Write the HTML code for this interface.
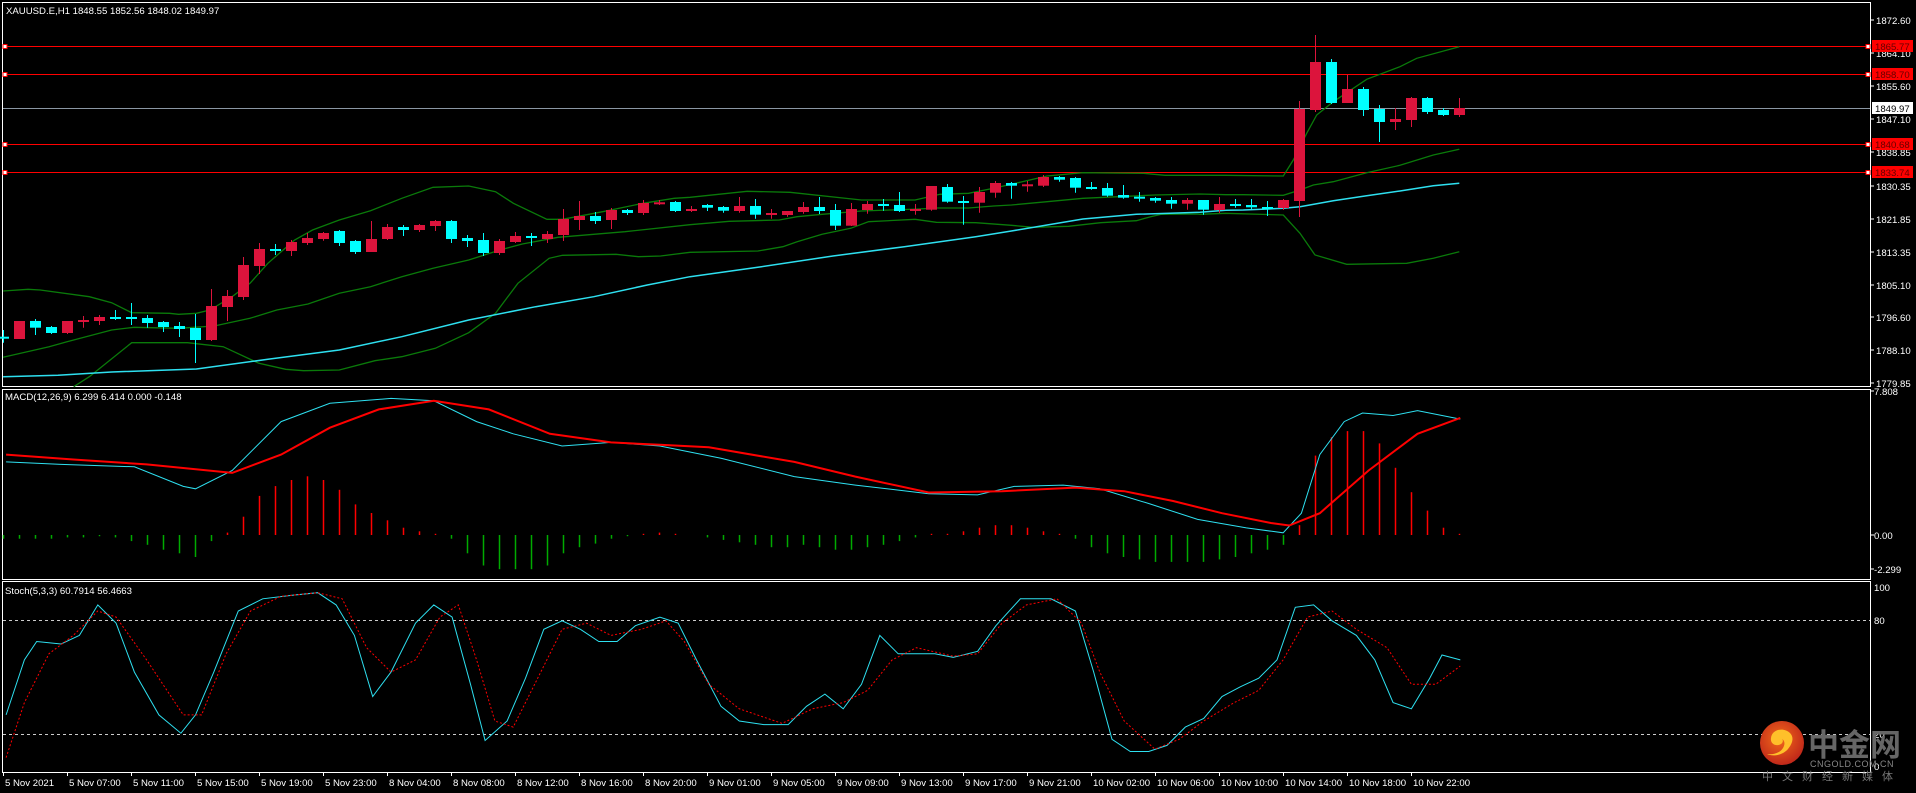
<!DOCTYPE html>
<html><head><meta charset="utf-8"><style>
html,body{margin:0;padding:0;background:#000;width:1916px;height:793px;overflow:hidden}
svg{display:block}
text{font-family:"Liberation Sans","Noto Sans CJK SC",sans-serif;font-size:9.6px;fill:#fff}
</style></head><body>
<svg id="s" width="1916" height="793" xmlns="http://www.w3.org/2000/svg"></svg>
<script>
const S=document.getElementById('s');let h='';
const ax=v=>v;
h+='<rect x="2.5" y="2.5" width="1868" height="384" fill="none" stroke="#fff"/>';
h+='<rect x="2.5" y="389.5" width="1868" height="190" fill="none" stroke="#fff"/>';
h+='<rect x="2.5" y="581.5" width="1868" height="191" fill="none" stroke="#fff"/>';
const pl=[[1872.60,20],[1864.10,53],[1855.60,86],[1847.10,119],[1838.85,152],[1830.35,186],[1821.85,219],[1813.35,252],[1805.10,285],[1796.60,317],[1788.10,350],[1779.85,383]];
pl.forEach(p=>{h+=`<line x1="1870" x2="1874" y1="${p[1]}" y2="${p[1]}" stroke="#fff"/><text x="1876" y="${p[1]+4}">${p[0].toFixed(2)}</text>`});
[[46,'1865.77'],[74,'1858.70'],[144,'1840.68'],[172,'1833.74']].forEach(l=>{
h+=`<line x1="3" x2="1870" y1="${l[0]+.5}" y2="${l[0]+.5}" stroke="#f00"/>`;
h+=`<rect x="3" y="${l[0]-1.5}" width="4" height="4" fill="#fff" stroke="#f00"/><rect x="1866" y="${l[0]-1.5}" width="4" height="4" fill="#fff" stroke="#f00"/>`;
h+=`<rect x="1872" y="${l[0]-6}" width="41" height="12" fill="#f00"/><text x="1875" y="${l[0]+4}" style="fill:#600">${l[1]}</text>`;});
h+='<line x1="3" x2="1870" y1="108.5" y2="108.5" stroke="#8a96a3"/>';
h+='<rect x="1872" y="102" width="41" height="12" fill="#fff"/><text x="1875" y="112" style="fill:#000">1849.97</text>';
function pl4(pts,fx,fy,col,extra){return `<polyline fill="none" stroke="${col}" ${extra||''} points="${pts.map(p=>fx(p[0]).toFixed(1)+','+fy(p[1]).toFixed(1)).join(' ')}"/>`}
const z4x=x=>x/2.24,z4y=y=>150+y/3,z6x=x=>690+x/2.8,z6y=y=>150+y/3,z5x=x=>1200+x/3,z5y=y=>20+y/3;
function band(a,b,c,col,w){const pts=[];a.forEach(p=>pts.push([z4x(p[0]),z4y(p[1])]));b.forEach(p=>pts.push([z6x(p[0]),z6y(p[1])]));c.forEach(p=>pts.push([z5x(p[0]),z5y(p[1])]));
pts.sort((p,q)=>p[0]-q[0]);return pl4(pts,ax,ax,col,`stroke-width="${w}"`)}
h+=band([[7,423],[63,418],[90,420],[200,440],[250,458],[295,488],[380,490],[400,493],[440,490],[470,480],[520,440],[560,400],[600,340],[660,270],[700,240],[760,210],[830,182],[900,145],[970,112],[1050,108],[1110,125],[1150,160],[1225,208],[1260,208],[1350,185],[1440,160],[1510,145]],
[[0,142],[160,124],[280,127],[480,150],[630,150],[700,133],[780,130],[850,115],[1000,78],[1100,68],[1270,70],[1330,76],[1500,76]],
[[0,466],[250,468],[280,420],[320,340],[350,285],[400,245],[500,178],[600,140],[650,115],[778,80]],'#0a7a0a',1.3);
h+=band([[7,622],[110,590],[150,575],[250,540],[300,532],[400,535],[480,528],[560,505],[620,480],[690,462],[760,430],[830,410],[900,380],[970,355],[1050,330],[1120,300],[1170,282],[1250,262],[1400,245]],
[[0,224],[110,214],[250,210],[300,200],[370,193],[480,183],[560,180],[640,177],[690,174],[780,174],[850,168],[900,165],[1000,155],[1100,145],[1200,140],[1300,135],[1500,134]],
[[0,522],[130,524],[250,526],[300,510],[340,495],[400,485],[500,458],[600,436],[700,405],[778,388]],'#0a7a0a',1.3);
h+=band([[165,710],[200,680],[295,578],[420,578],[500,590],[580,640],[640,658],[680,662],[760,660],[840,632],[900,620],[975,595],[1050,548],[1110,490],[1160,400],[1230,325],[1260,316],[1380,313],[1430,320],[1480,318]],
[[0,307],[190,303],[260,290],[300,275],[370,253],[450,235],[500,215],[630,208],[690,217],[800,218],[900,226],[960,232],[1060,229],[1150,218],[1250,212],[1290,200],[1320,193],[1420,192],[1500,190]],
[[0,583],[250,585],[300,640],[345,705],[440,733],[620,730],[700,715],[778,695]],'#0a7a0a',1.3);
h+=band([[7,680],[130,676],[250,666],[440,657],[600,628],[760,600],[900,560],[1050,510],[1200,470],[1330,440],[1450,405]],
[[0,380],[200,350],[400,318],[600,290],[800,260],[900,243],[1000,225],[1100,207],[1250,193],[1500,181]],
[[0,577],[130,570],[250,565],[300,560],[400,542],[500,527],[600,513],[700,497],[778,490]],'#2ee0f0',1.5);
const A=[['c',560,566,540,578],['r',513,567,513,567],['c',513,533,507,555],['c',531,549,528,552],['r',513,549,513,552],['r',510,516,498,533],['r',501,513,495,525],['c',501,504,480,510],['c',501,507,459,525],['c',504,519,495,533],['c',516,531,513,546],['c',528,537,516,561],['c',534,570,492,639],['r',468,570,417,573],['r',438,471,420,513],['r',345,441,321,450],['r',297,348,279,372],['c',297,303,282,315],['r',276,303,270,318],['r',264,279,249,285],['r',249,267,246,272],['c',243,279,240,288],['c',273,306,270,312],['r',267,306,213,306],['r',231,267,222,270],['c',231,240,225,258],['r',225,240,222,246],['r',213,228,210,243],['c',213,267,210,279],['c',264,273,255,291],['c',270,309,249,318],['r',273,309,267,315],['r',258,276,246,279],['c',258,264,249,288],['r',252,267,243,279],['r',207,255,177,273],['r',198,210,153,240],['c',198,213,186,222],['r',180,210,174,237],['c',180,189,177,195],['r',159,189,150,195],['r',157,161,150,165],['c',156,183,153,186],['r',177,183,168,186]];
const B=[['c',165,173,162,183],['c',171,182,168,188],['r',168,183,141,188],['c',168,194,147,206],['r',189,194,177,206],['r',183,195,183,200],['r',171,186,156,191],['c',171,183,141,192],['c',180,227,162,240],['r',177,227,159,228],['r',162,180,153,191],['c',162,167,147,182],['c',165,183,126,186],['r',177,182,162,194],['r',108,179,108,182],['c',111,155,102,158],['c',153,158,138,224],['r',126,158,111,188],['r',99,128,93,143],['c',99,107,96,146],['r',103,106,93,125],['r',81,107,75,111],['c',81,89,78,95],['c',84,113,81,128],['c',111,116,96,119],['c',114,137,99,140],['c',135,143,105,146],['c',140,146,126,155],['c',144,152,141,158],['c',150,161,141,176],['r',150,161,144,179],['c',150,179,150,194]];
const C=[['r',552,570,531,579],['c',552,557,537,563],['c',555,562,537,568],['c',561,564,543,588],['r',540,564,537,570],['r',267,543,243,591],['r',126,270,45,276],['c',126,249,117,252],['r',207,249,165,249],['c',207,270,201,288],['c',267,306,255,366],['r',297,306,264,330],['r',234,300,231,321],['c',234,276,231,282],['c',270,285,264,288],['r',264,285,234,291]];
const bars=[];A.forEach(b=>bars.push([b[0],z4y(b[1]),z4y(b[2]),z4y(b[3]),z4y(b[4])]));
B.forEach(b=>bars.push([b[0],z6y(b[1]),z6y(b[2]),z6y(b[3]),z6y(b[4])]));
C.forEach(b=>bars.push([b[0],z5y(b[1]),z5y(b[2]),z5y(b[3]),z5y(b[4])]));
bars.forEach((b,i)=>{const x=3+16*i;const col=b[0]=='r'?'#dc143c':'#00ffff';
h+=`<line x1="${x+.5}" x2="${x+.5}" y1="${b[3].toFixed(1)}" y2="${b[4].toFixed(1)}" stroke="${col}"/>`;
const hh=Math.max(2,b[2]-b[1]);h+=`<rect x="${x-5}" y="${b[1].toFixed(1)}" width="11" height="${hh.toFixed(1)}" fill="${col}"/>`;});
h+='<text x="5" y="400">MACD(12,26,9) 6.299 6.414 0.000 -0.148</text>';
[[7.808,395],['0.00',539],[-2.299,573]].forEach(l=>{h+=`<line x1="1870" x2="1874" y1="${l[1]-4}" y2="${l[1]-4}" stroke="#fff"/><text x="1874" y="${l[1]}">${l[0]}</text>`});
const hist=[-3,-3,-3,-3,-2,-2,-1,-2,-5,-8,-12,-15,-18,-5,2,15,32,40,45,48,45,37,25,18,12,6,3,1,-3,-15,-25,-28,-28,-28,-25,-15,-10,-7,-3,-1,1,2,1,0,-2,-4,-6,-8,-10,-10,-8,-10,-12,-12,-10,-8,-5,-2,1,1,3,6,8,8,6,3,1,-3,-10,-15,-18,-20,-22,-22,-22,-22,-20,-18,-15,-12,-8,8,65,80,85,85,75,55,35,20,6,1];
const z=535;hist.forEach((v,i)=>{const x=3+16*i+.5;const d=v*1.222;if(Math.abs(d)<1)return;
h+=`<line x1="${x}" x2="${x}" y1="${z}" y2="${(z-d).toFixed(1)}" stroke="${v>0?'#f00':'#0a0'}" stroke-width="1.5"/>`});
const D=1.222,dd=x=>x*D;
h+=pl4([[5,378],[50,380],[110,382],[150,398],[160,400],[190,385],[230,345],[270,330],[320,326],[355,328],[390,345],[420,355],[460,365],[500,362],[540,365],[590,375],[650,390],[700,397],[760,404],[800,405],[830,398],[870,397],[900,400],[940,412],[980,425],[1020,432],[1050,436],[1065,420],[1080,372],[1100,345],[1115,338],[1140,340],[1160,336],[1195,343]],dd,dd,'#2ee0f0');
h+=pl4([[5,372],[60,376],[120,380],[190,387],[230,372],[270,350],[310,335],[355,328],[400,335],[450,355],[500,362],[540,364],[580,366],[650,378],[700,390],[760,403],[820,402],[880,399],[920,402],[960,410],[1000,420],[1040,428],[1055,430],[1080,420],[1120,385],[1160,355],[1195,342]],dd,dd,'#f00','stroke-width="2"');
h+='<text x="5" y="594">Stoch(5,3,3) 60.7914 56.4663</text>';
h+='<line x1="3" x2="1870" y1="620.5" y2="620.5" stroke="#ccc" stroke-dasharray="3,3"/><line x1="3" x2="1870" y1="734.5" y2="734.5" stroke="#ccc" stroke-dasharray="3,3"/>';
[['100',591],['80',624],['20',738],['0',770]].forEach(l=>{h+=`<text x="1874" y="${l[1]}">${l[0]}</text>`});
h+=pl4([[5,585],[20,540],[30,525],[50,527],[65,520],[80,495],[95,510],[110,550],[130,585],[148,600],[160,585],[175,550],[195,500],[215,490],[240,487],[260,485],[275,495],[290,520],[305,570],[320,550],[340,510],[355,495],[370,505],[385,560],[397,606],[415,590],[430,555],[445,515],[460,508],[475,515],[490,525],[505,525],[520,512],[540,505],[555,510],[570,540],[590,578],[605,590],[625,593],[645,593],[660,578],[675,568],[690,580],[705,560],[720,520],[735,535],[750,535],[765,535],[780,538],[800,533],[815,512],[835,490],[860,490],[880,500],[895,550],[910,605],[925,615],[940,615],[955,610],[970,595],[985,588],[1000,570],[1015,562],[1030,555],[1045,540],[1060,497],[1075,495],[1090,508],[1110,520],[1125,540],[1140,575],[1155,580],[1170,555],[1180,536],[1195,540]],dd,dd,'#2ee0f0');
h+=pl4([[5,620],[20,575],[40,535],[60,520],[80,500],[95,505],[120,540],[150,585],[165,585],[185,535],[205,500],[230,488],[260,485],[280,490],[300,530],[320,550],[340,540],[360,505],[375,495],[390,540],[405,590],[420,595],[440,555],[460,515],[480,510],[500,520],[525,515],[545,508],[560,525],[580,560],[605,580],[640,592],[665,580],[690,575],[710,565],[730,540],[750,530],[780,537],[800,535],[820,510],[840,495],[865,490],[885,510],[900,550],[920,590],[945,613],[965,605],[985,590],[1010,575],[1030,565],[1050,540],[1070,505],[1090,500],[1110,515],[1135,530],[1155,560],[1175,560],[1195,545]],dd,dd,'#f00','stroke-dasharray="2,2"');
const T=["5 Nov 2021","5 Nov 07:00","5 Nov 11:00","5 Nov 15:00","5 Nov 19:00","5 Nov 23:00","8 Nov 04:00","8 Nov 08:00","8 Nov 12:00","8 Nov 16:00","8 Nov 20:00","9 Nov 01:00","9 Nov 05:00","9 Nov 09:00","9 Nov 13:00","9 Nov 17:00","9 Nov 21:00","10 Nov 02:00","10 Nov 06:00","10 Nov 10:00","10 Nov 14:00","10 Nov 18:00","10 Nov 22:00"];
T.forEach((t,i)=>{const x=3+64*i;h+=`<line x1="${x+.5}" x2="${x+.5}" y1="772" y2="776" stroke="#fff"/><text x="${x+2}" y="786">${t}</text>`});
h+='<text x="6" y="14">XAUUSD.E,H1  1848.55 1852.56 1848.02 1849.97</text>';
h+='<defs><radialGradient id="g" cx="45%" cy="40%" r="60%"><stop offset="0" stop-color="#f26a1b"/><stop offset="1" stop-color="#c0281a"/></radialGradient></defs>';
h+='<circle cx="1782" cy="743" r="22" fill="url(#g)"/>';
h+='<path d="M1790 733c-6-6-18-4-19 5c-1 6 5 9 10 6c3-2 2-6-1-6c4 1 6 5 3 10c-3 5-10 7-16 6c6 3 16 1 21-5c5-6 6-12 2-16z" fill="#ffc02a"/>';
h+='<text x="1808" y="756" style="font-size:31px;font-weight:bold;fill:#666">中金网</text>';
h+='<text x="1810" y="767" style="font-size:9px;fill:#888;letter-spacing:.5px">CNGOLD.COM.CN</text>';
h+='<text x="1762" y="780" style="font-size:11px;fill:#777;letter-spacing:9px">中文财经新媒体</text>';
S.innerHTML=h;
</script>
</body></html>
